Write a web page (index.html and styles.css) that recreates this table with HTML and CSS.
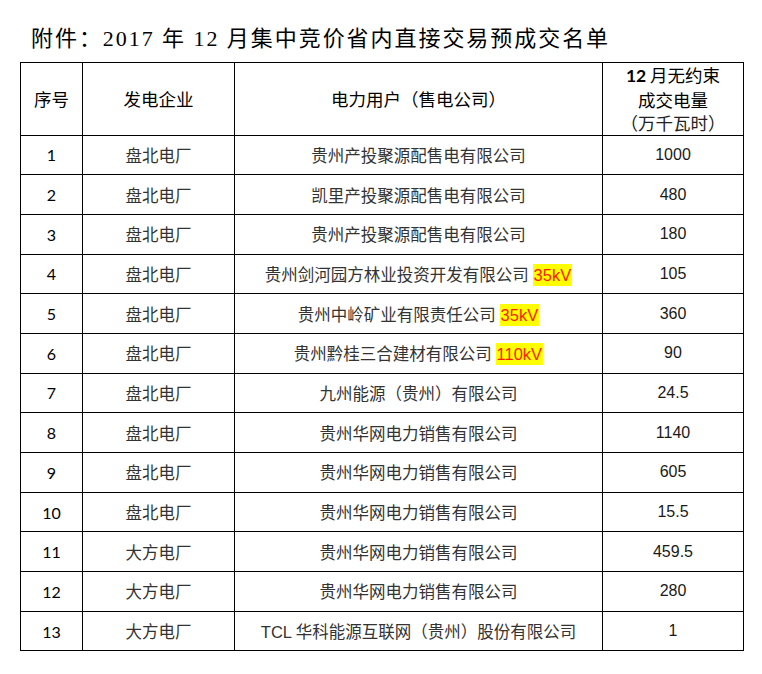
FILE: index.html
```html
<!DOCTYPE html>
<html lang="zh-CN">
<head>
<meta charset="utf-8">
<title>附件：2017年12月集中竞价省内直接交易预成交名单</title>
<link rel="stylesheet" href="styles.css">
</head>
<body>
<h1 class="title">附件：2017 年 12 月集中竞价省内直接交易预成交名单</h1>
<table class="list">
  <colgroup>
    <col class="c-no">
    <col class="c-gen">
    <col class="c-user">
    <col class="c-amt">
  </colgroup>
  <thead>
    <tr>
      <th>序号</th>
      <th>发电企业</th>
      <th>电力用户（售电公司）</th>
      <th class="amt-head"><span class="num-b">12</span> 月无约束<br>成交电量<br><span class="unit">（万千瓦时）</span></th>
    </tr>
  </thead>
  <tbody>
    <tr><td class="no">1</td><td class="cn">盘北电厂</td><td class="cn">贵州产投聚源配售电有限公司</td><td class="amt">1000</td></tr>
    <tr><td class="no">2</td><td class="cn">盘北电厂</td><td class="cn">凯里产投聚源配售电有限公司</td><td class="amt">480</td></tr>
    <tr><td class="no">3</td><td class="cn">盘北电厂</td><td class="cn">贵州产投聚源配售电有限公司</td><td class="amt">180</td></tr>
    <tr><td class="no">4</td><td class="cn">盘北电厂</td><td class="cn">贵州剑河园方林业投资开发有限公司 <span class="kv">35kV</span></td><td class="amt">105</td></tr>
    <tr><td class="no">5</td><td class="cn">盘北电厂</td><td class="cn">贵州中岭矿业有限责任公司 <span class="kv">35kV</span></td><td class="amt">360</td></tr>
    <tr><td class="no">6</td><td class="cn">盘北电厂</td><td class="cn">贵州黔桂三合建材有限公司 <span class="kv">110kV</span></td><td class="amt">90</td></tr>
    <tr><td class="no">7</td><td class="cn">盘北电厂</td><td class="cn">九州能源（贵州）有限公司</td><td class="amt">24.5</td></tr>
    <tr><td class="no">8</td><td class="cn">盘北电厂</td><td class="cn">贵州华网电力销售有限公司</td><td class="amt">1140</td></tr>
    <tr><td class="no">9</td><td class="cn">盘北电厂</td><td class="cn">贵州华网电力销售有限公司</td><td class="amt">605</td></tr>
    <tr><td class="no">10</td><td class="cn">盘北电厂</td><td class="cn">贵州华网电力销售有限公司</td><td class="amt">15.5</td></tr>
    <tr><td class="no">11</td><td class="cn">大方电厂</td><td class="cn">贵州华网电力销售有限公司</td><td class="amt">459.5</td></tr>
    <tr><td class="no">12</td><td class="cn">大方电厂</td><td class="cn">贵州华网电力销售有限公司</td><td class="amt">280</td></tr>
    <tr><td class="no">13</td><td class="cn">大方电厂</td><td class="cn"><span class="latin">TCL</span> 华科能源互联网（贵州）股份有限公司</td><td class="amt">1</td></tr>
  </tbody>
</table>
</body>
</html>
```

FILE: styles.css
```css
html, body {
  margin: 0;
  padding: 0;
  background: #fff;
}

body {
  font-family: "Noto Sans CJK SC", sans-serif;
  color: #000;
}

.title {
  margin: 24px 0 8px 31px;
  height: 30px;
  font-family: "Liberation Serif", "Noto Sans CJK SC", serif;
  font-size: 22px;
  line-height: 30px;
  font-weight: normal;
  letter-spacing: 1.95px;
  color: #000;
  white-space: nowrap;
}

.list {
  margin-left: 20px;
  border-collapse: collapse;
  table-layout: fixed;
  width: 723px;
}

.c-no { width: 62px; }
.c-gen { width: 152px; }
.c-user { width: 368px; }
.c-amt { width: 141px; }

.list th,
.list td {
  border: 1px solid #000;
  padding: 0;
  text-align: center;
  vertical-align: middle;
}

.list th {
  height: 71px;
  font-family: "Noto Sans CJK SC", sans-serif;
  font-size: 17.5px;
  font-weight: normal;
  color: #000;
  line-height: 23.5px;
}

.list td {
  height: 38.7px;
}

.amt-head {
  font-size: 17.5px;
}

.num-b {
  font-family: Lato, "Liberation Sans", sans-serif;
  font-weight: bold;
}

.unit {
  color: #222;
}

.no {
  font-family: Lato, "Liberation Sans", sans-serif;
  font-size: 16px;
  color: #000;
}

.cn {
  font-family: "Noto Sans CJK SC", sans-serif;
  font-size: 16.5px;
  color: #333;
}

.latin {
  font-family: "Liberation Sans", sans-serif;
}

.amt {
  font-family: "Liberation Sans", Arial, sans-serif;
  font-size: 16px;
  color: #1a1a1a;
}

.kv {
  display: inline-block;
  font-family: "Liberation Sans", Arial, sans-serif;
  font-size: 16.5px;
  line-height: 22px;
  padding: 0 1px;
  background: #ffff00;
  color: #ff1a00;
}
```
